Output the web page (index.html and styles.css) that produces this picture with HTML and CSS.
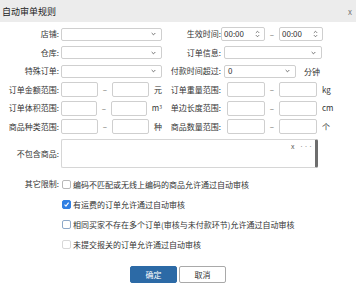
FILE: index.html
```html
<!DOCTYPE html>
<html lang="zh-CN">
<head>
    <meta charset="UTF-8">
    <title>自动审单规则</title>
    <link rel="stylesheet" href="styles.css">
</head>
<body>
    <div class="dialog">
        <div class="title-bar">
            <span class="title">自动审单规则</span>
            <span class="close">x</span>
        </div>

        <div class="form">
            <!-- 店铺 / 生效时间 -->
            <div class="row">
                <label class="label">店铺:</label>
                <div class="select w-left">
                    <span></span>
                    <svg class="chev" viewBox="0 0 6 4"><path d="M0.8 0.8 L3 3 L5.2 0.8" /></svg>
                </div>
                <label class="label">生效时间:</label>
                <div class="time-group">
                    <div class="time">
                        <span>00:00</span>
                        <svg class="spin" viewBox="0 0 6 9"><path d="M1 3.2 L3 1.2 L5 3.2 M1 5.8 L3 7.8 L5 5.8" /></svg>
                    </div>
                    <span class="dash">–</span>
                    <div class="time">
                        <span>00:00</span>
                        <svg class="spin" viewBox="0 0 6 9"><path d="M1 3.2 L3 1.2 L5 3.2 M1 5.8 L3 7.8 L5 5.8" /></svg>
                    </div>
                </div>
            </div>

            <!-- 仓库 / 订单信息 -->
            <div class="row">
                <label class="label">仓库:</label>
                <div class="select w-left">
                    <span></span>
                    <svg class="chev" viewBox="0 0 6 4"><path d="M0.8 0.8 L3 3 L5.2 0.8" /></svg>
                </div>
                <label class="label">订单信息:</label>
                <div class="select w-right">
                    <span></span>
                    <svg class="chev" viewBox="0 0 6 4"><path d="M0.8 0.8 L3 3 L5.2 0.8" /></svg>
                </div>
            </div>

            <!-- 特殊订单 / 付款时间超过 -->
            <div class="row">
                <label class="label">特殊订单:</label>
                <div class="select w-left">
                    <span></span>
                    <svg class="chev" viewBox="0 0 6 4"><path d="M0.8 0.8 L3 3 L5.2 0.8" /></svg>
                </div>
                <label class="label">付款时间超过:</label>
                <div class="inline">
                    <div class="select w-pay">
                        <span>0</span>
                        <svg class="chev" viewBox="0 0 6 4"><path d="M0.8 0.8 L3 3 L5.2 0.8" /></svg>
                    </div>
                    <span class="unit">分钟</span>
                </div>
            </div>

            <div class="row">
                <label class="label">订单金额范围:</label>
                <div class="range">
                    <div class="input"></div><span class="dash">–</span><div class="input"></div><span class="unit">元</span>
                </div>
                <label class="label">订单重量范围:</label>
                <div class="range right">
                    <div class="input"></div><span class="dash">–</span><div class="input"></div><span class="unit">kg</span>
                </div>
            </div>

            <div class="row">
                <label class="label">订单体积范围:</label>
                <div class="range">
                    <div class="input"></div><span class="dash">–</span><div class="input"></div><span class="unit">m<sup>3</sup></span>
                </div>
                <label class="label">单边长度范围:</label>
                <div class="range right">
                    <div class="input"></div><span class="dash">–</span><div class="input"></div><span class="unit">cm</span>
                </div>
            </div>

            <div class="row">
                <label class="label">商品种类范围:</label>
                <div class="range">
                    <div class="input"></div><span class="dash">–</span><div class="input"></div><span class="unit">种</span>
                </div>
                <label class="label">商品数量范围:</label>
                <div class="range right">
                    <div class="input"></div><span class="dash">–</span><div class="input"></div><span class="unit">个</span>
                </div>
            </div>

            <!-- 不包含商品 -->
            <div class="row goods-row">
                <label class="label">不包含商品:</label>
                <div class="goods-box">
                    <span class="goods-x">x</span>
                    <span class="goods-more">•••</span>
                </div>
            </div>

            <!-- 其它限制 -->
            <div class="checks">
                <div class="check-row">
                    <label class="label">其它限制:</label>
                    <span class="box"></span>
                    <span class="check-text">编码不匹配或无线上编码的商品允许通过自动审核</span>
                </div>
                <div class="check-row">
                    <span class="label"></span>
                    <span class="box checked">
                        <svg viewBox="0 0 9 9"><path d="M2 4.6 L3.8 6.6 L7.2 2" /></svg>
                    </span>
                    <span class="check-text">有运费的订单允许通过自动审核</span>
                </div>
                <div class="check-row">
                    <span class="label"></span>
                    <span class="box focus"></span>
                    <span class="check-text">相同买家不存在多个订单(审核与未付款环节)允许通过自动审核</span>
                </div>
                <div class="check-row">
                    <span class="label"></span>
                    <span class="box light"></span>
                    <span class="check-text">未提交报关的订单允许通过自动审核</span>
                </div>
            </div>

            <div class="buttons">
                <button class="btn primary">确定</button>
                <button class="btn">取消</button>
            </div>
        </div>
    </div>
</body>
</html>
```

FILE: styles.css
```css
body {
    margin: 0;
    padding: 0;
    background-color: #ffffff;
    font-family: "Noto Sans CJK SC", "Noto Sans", sans-serif;
    font-size: 8px;
    color: #333333;
}

.dialog {
    width: 356px;
    height: 289px;
    overflow: hidden;
}

.title-bar {
    height: 22px;
    background-color: #ececec;
    display: flex;
    align-items: center;
    justify-content: space-between;
    padding: 0 4px 0 2px;
}

.title {
    font-size: 9px;
    color: #222222;
}

.close {
    font-size: 8px;
    color: #777777;
}

.form {
    padding-top: 4.5px;
    display: flex;
    flex-direction: column;
    gap: 3.5px;
}

.row {
    display: grid;
    grid-template-columns: 61px 101px 61px 1fr;
    height: 15px;
    align-items: center;
}

.label {
    text-align: right;
    padding-right: 2px;
    white-space: nowrap;
    line-height: 1;
}

.select,
.time,
.input {
    box-sizing: border-box;
    border: 1px solid #cfcfcf;
    border-radius: 2px;
    background: #ffffff;
}

.select {
    height: 13px;
    display: flex;
    align-items: center;
    justify-content: space-between;
    padding: 0 5px 0 3px;
    line-height: 1;
}

.w-left {
    width: 101px;
}

.w-right {
    width: 98px;
    margin-left: 1px;
}

.w-pay {
    width: 72px;
}

.chev {
    width: 5px;
    height: 4px;
    fill: none;
    stroke: #555555;
    stroke-width: 1;
}

.inline {
    display: flex;
    align-items: center;
    margin-left: 1px;
}

.inline .unit {
    margin-left: 8px;
}

.time-group {
    display: flex;
    align-items: center;
    margin-left: -2px;
}

.time {
    width: 44px;
    height: 14px;
    display: flex;
    align-items: center;
    justify-content: space-between;
    padding: 0 4px 0 2px;
    line-height: 1;
}

.spin {
    width: 5px;
    height: 8px;
    fill: none;
    stroke: #555555;
    stroke-width: 0.9;
}

.dash {
    width: 14px;
    text-align: center;
    color: #666666;
}

.range {
    display: flex;
    align-items: center;
}

.range .input {
    width: 37px;
    height: 15px;
}

.range .unit {
    margin-left: 5px;
    line-height: 1;
}

.range.right {
    margin-left: 4px;
}

.range.right .input {
    width: 38px;
}

.range.right .dash {
    width: 14px;
}

sup {
    font-size: 5px;
    vertical-align: top;
}

.goods-row {
    height: 29px;
    margin-top: 1.5px;
    grid-template-columns: 61px 1fr;
}

.goods-box {
    box-sizing: border-box;
    width: 257px;
    height: 29px;
    border: 1px solid #d6d6d6;
    border-right: 3px solid #6e6e6e;
    border-radius: 2px;
    display: flex;
    justify-content: flex-end;
    align-items: flex-start;
    gap: 5px;
    padding: 3px 2px 0 0;
    color: #555555;
    line-height: 1;
}

.goods-x {
    font-size: 7px;
}

.goods-more {
    font-size: 4px;
    letter-spacing: 0.5px;
    padding-top: 2px;
}

.checks {
    margin-top: 6.5px;
    display: flex;
    flex-direction: column;
    gap: 8px;
}

.check-row {
    display: flex;
    align-items: center;
    height: 12px;
}

.check-row .label {
    width: 59px;
    padding-right: 3px;
}

.box {
    box-sizing: border-box;
    width: 9px;
    height: 9px;
    border: 1px solid #b8b8b8;
    border-radius: 2px;
    background: #ffffff;
    display: flex;
}

.box.checked {
    background-color: #2f7fe3;
    border-color: #2f7fe3;
}

.box.checked svg {
    width: 7px;
    height: 7px;
    fill: none;
    stroke: #ffffff;
    stroke-width: 1.4;
}

.box.focus {
    border-color: #8ea9c9;
}

.box.light {
    border-color: #d8d8d8;
}

.check-text {
    margin-left: 2px;
    white-space: nowrap;
}

.buttons {
    margin-top: 12px;
    display: flex;
    justify-content: center;
    gap: 2px;
}

.btn {
    box-sizing: border-box;
    width: 47px;
    height: 17px;
    border: 1px solid #a9a9a9;
    border-radius: 2px;
    background-color: #ffffff;
    font-family: "Noto Sans CJK SC", sans-serif;
    font-size: 8px;
    color: #333333;
    padding: 0;
    cursor: pointer;
}

.btn.primary {
    background-color: #2c6aa6;
    border-color: #2c6aa6;
    color: #ffffff;
}
```
